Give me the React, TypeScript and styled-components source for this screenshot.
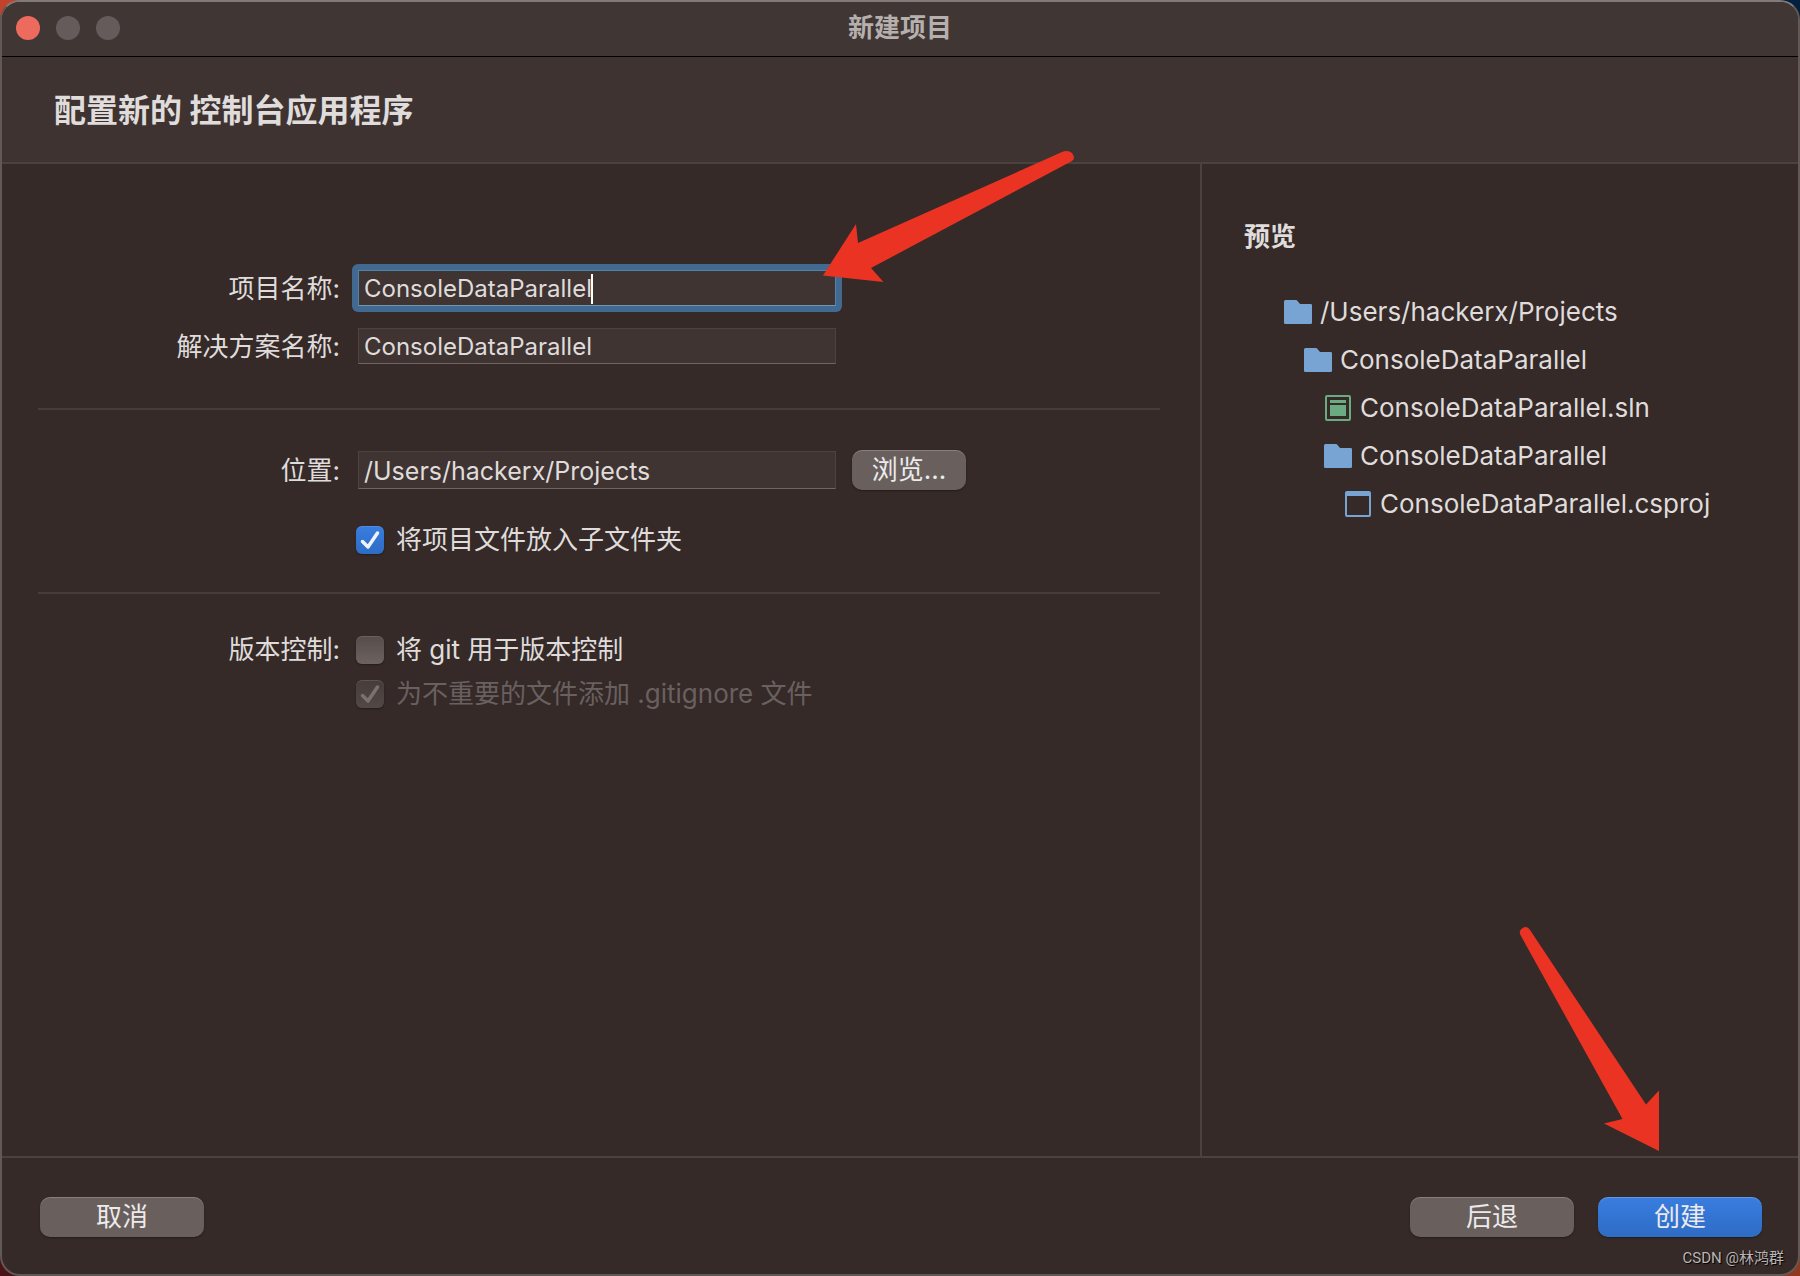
import React, { useLayoutEffect, useState } from "react";
import styled, { createGlobalStyle } from "styled-components";

const uiFont = 'Inter, "Noto Sans CJK SC", sans-serif';

const colors = {
  window: "#352a28",
  header: "#3e3331",
  titleBar: "#403634",
  line: "#4b413f",
  frame: "#625957",
  text: "#dfdcdb",
  dim: "#696060",
  field: "#3f3432",
  button: "#69605e",
  focus: "#42698f",
  folder: "#78a4d4",
  solution: "#6bab82",
  arrow: "#eb3323",
};

const GlobalStyle = createGlobalStyle`
  *, *::before, *::after { box-sizing: border-box; }
  body {
    margin: 0;
    color: ${colors.text};
    font: 400 26px/36px ${uiFont};
    background:
      linear-gradient(90deg, #c2432a 50%, #04203f 50%) top / 100% 50% no-repeat,
      linear-gradient(90deg, #4a1419 50%, #8f3a1e 50%) bottom / 100% 50% no-repeat;
  }
`;

const Window = styled.div`
  position: relative;
  display: flex;
  flex-direction: column;
  min-height: 100vh;
  overflow: hidden;
  border: 2px solid ${colors.frame};
  border-top-color: #827a78;
  border-radius: 20px;
  background: ${colors.window};
`;

const TitleBar = styled.div`
  display: grid;
  grid-template-columns: 1fr auto 1fr;
  align-items: center;
  height: 55px;
  padding: 0 14px 2px;
  border-bottom: 1px solid #000;
  background: ${colors.titleBar};
`;

const Lights = styled.div`
  display: flex;
  gap: 16px;
`;

const Light = styled.button<{ $color: string }>`
  width: 24px;
  height: 24px;
  padding: 0;
  border: 0;
  border-radius: 50%;
  background: ${(p) => p.$color};
`;

const WindowTitle = styled.div`
  color: #b5afae;
  font-weight: 700;
`;

const Header = styled.header`
  padding: 30px 52px 27px;
  border-bottom: 2px solid ${colors.line};
  background: ${colors.header};
`;

const Heading = styled.h1`
  margin: 0;
  font-size: 32px;
  font-weight: 700;
  line-height: 48px;
`;

const Body = styled.div`
  display: flex;
  flex: 1;
`;

const Form = styled.form`
  flex: 1;
  padding: 68px 40px 0 36px;
`;

const Section = styled.section<{ $bottom: number }>`
  padding-top: 36px;
  padding-bottom: ${(p) => p.$bottom}px;

  & + & {
    border-top: 2px solid #463c3a;
  }
`;

const Row = styled.div<{ $gap?: number }>`
  display: grid;
  grid-template-columns: 302px auto 1fr;
  align-items: center;
  min-height: 40px;
  margin-top: ${(p) => p.$gap ?? 0}px;
`;

const FieldLabel = styled.label`
  padding-top: 2px;
  text-align: right;
`;

const FieldCell = styled.div<{ $focused?: boolean }>`
  position: relative;
  margin: 0 16px 0 18px;

  &::before {
    content: "";
    display: ${(p) => (p.$focused ? "block" : "none")};
    position: absolute;
    inset: -6px;
    border-radius: 6px;
    background: ${colors.focus};
  }
`;

const TextField = styled.input<{ $focused?: boolean; $tall?: boolean }>`
  position: relative;
  display: block;
  width: 478px;
  height: ${(p) => (p.$tall ? 38 : 36)}px;
  padding: 2px 5px 0;
  border: 1px solid ${(p) => (p.$focused ? "#5482ab" : "#4c4240")};
  border-bottom-color: ${(p) => (p.$focused ? "#7094b5" : "#6f6664")};
  border-radius: 0;
  outline: none;
  background: ${colors.field};
  color: inherit;
  font: inherit;
  font-size: ${(p) => (p.$tall ? 25 : 24)}px;
  caret-color: transparent;
`;

const Caret = styled.span`
  position: absolute;
  top: 4px;
  width: 2px;
  height: 30px;
  background: #fff;
`;

const PushButton = styled.button<{ $primary?: boolean; $small?: boolean }>`
  width: ${(p) => (p.$small ? 114 : 164)}px;
  height: 40px;
  padding: 0;
  border: 0;
  border-radius: 10px;
  background: ${(p) => (p.$primary ? "linear-gradient(#387de0, #2e6cc5)" : colors.button)};
  box-shadow: inset 0 1px 0 rgba(255, 255, 255, 0.2), 0 1px 2px rgba(0, 0, 0, 0.35);
  color: #eceaea;
  font: inherit;
  line-height: 36px;
`;

const CheckLabel = styled.label<{ $dim?: boolean }>`
  display: flex;
  grid-column: 2 / -1;
  align-items: center;
  gap: 12px;
  margin-left: 16px;
  color: ${(p) => (p.$dim ? colors.dim : "inherit")};
`;

const CheckBox = styled.span`
  position: relative;
  display: block;
  width: 28px;
  height: 28px;
`;

const CheckInput = styled.input`
  display: block;
  width: 28px;
  height: 28px;
  margin: 0;
  appearance: none;
  border-radius: 6px;
  background: linear-gradient(#564c4a, #6c6260);
  box-shadow: inset 0 1px 0 rgba(255, 255, 255, 0.12), 0 1px 2px rgba(0, 0, 0, 0.35);

  &:checked {
    background: linear-gradient(#387de0, #2e6cc5);
  }

  &:checked:disabled {
    background: linear-gradient(#463c3a, #524846);
  }
`;

const CheckMark = styled.svg`
  position: absolute;
  inset: 0;
  pointer-events: none;
`;

const CheckRowLabel = styled.span`
  text-align: right;
`;

const Preview = styled.aside`
  width: 598px;
  padding: 55px 38px 0 42px;
  border-left: 2px solid ${colors.line};
`;

const PreviewTitle = styled.h2`
  margin: 0 0 33px;
  font-size: 26px;
  font-weight: 700;
  line-height: 36px;
`;

const Tree = styled.ul`
  margin: 0;
  padding: 0 0 0 40px;
  list-style: none;
`;

const TreeItem = styled.li<{ $level: number }>`
  display: flex;
  align-items: center;
  gap: 8px;
  height: 48px;
  padding-left: ${(p) => p.$level * 20}px;
`;

const Footer = styled.footer`
  display: flex;
  gap: 24px;
  padding: 39px 36px 37px 38px;
  border-top: 2px solid ${colors.line};
`;

const Spacer = styled.div`
  flex: 1;
`;

const NameArrow = styled.svg`
  position: absolute;
  z-index: 1;
  top: -120px;
  left: 464px;
  pointer-events: none;
`;

const CreateSlot = styled.div`
  position: relative;
`;

const CreateArrow = styled.svg`
  position: absolute;
  right: 102px;
  bottom: 85px;
  pointer-events: none;
`;

const Watermark = styled.div`
  position: absolute;
  right: 14px;
  bottom: 6px;
  color: #b9b5b4;
  font: 15px/20px Roboto, "Noto Sans CJK SC", sans-serif;
  text-shadow: 1px 1px 1px #000;
`;

function FolderIcon() {
  return (
    <svg width="28" height="26" viewBox="0 0 28 26" aria-hidden="true">
      <path
        d="M1.500 1H12Q12.800 1 13.300 1.700L16 5H26.800Q28 5 28 6.200V23.800Q28 25 26.800 25H1.200Q0 25 0 23.800V2.500Q0 1 1.500 1Z"
        fill={colors.folder}
      />
    </svg>
  );
}

function SolutionIcon() {
  return (
    <svg width="28" height="26" viewBox="0 0 28 26" aria-hidden="true">
      <rect x="2" y="1" width="24" height="24" rx="1" fill="none" stroke={colors.solution} strokeWidth="2" />
      <path d="M6 5H22V8H6ZM6 10H22V21H6Z" fill={colors.solution} />
    </svg>
  );
}

function ProjectIcon() {
  return (
    <svg width="28" height="26" viewBox="0 0 28 26" aria-hidden="true">
      <rect x="2" y="1" width="24" height="24" rx="1" fill="none" stroke={colors.folder} strokeWidth="2" />
      <path d="M2 1H26V5H2Z" fill={colors.folder} />
    </svg>
  );
}

type CheckProps = {
  label: string;
  checked: boolean;
  disabled?: boolean;
  onChange?: (value: boolean) => void;
};

function Check({ label, checked, disabled, onChange }: CheckProps) {
  return (
    <CheckLabel $dim={disabled}>
      <CheckBox>
        <CheckInput
          type="checkbox"
          checked={checked}
          disabled={disabled}
          onChange={(e) => onChange?.(e.target.checked)}
        />
        {checked && (
          <CheckMark width="28" height="28" viewBox="0 0 28 28" aria-hidden="true">
            <path
              d="M6.500 15.500L12 21L21.500 7"
              fill="none"
              stroke={disabled ? "#7b7270" : "#eef3fb"}
              strokeWidth="3.500"
              strokeLinecap="round"
              strokeLinejoin="round"
            />
          </CheckMark>
        )}
      </CheckBox>
      {label}
    </CheckLabel>
  );
}

function textWidth(text: string) {
  const context = document.createElement("canvas").getContext("2d");
  if (!context) return 0;
  context.font = `24px ${uiFont}`;
  return Math.round(context.measureText(text).width);
}

export default function App() {
  const [projectName, setProjectName] = useState("ConsoleDataParallel");
  const [solutionName, setSolutionName] = useState("ConsoleDataParallel");
  const [location, setLocation] = useState("/Users/hackerx/Projects");
  const [subfolder, setSubfolder] = useState(true);
  const [git, setGit] = useState(false);
  const [caretX, setCaretX] = useState(0);

  useLayoutEffect(() => setCaretX(5 + textWidth(projectName)), [projectName]);

  const tree = [
    { level: 0, icon: <FolderIcon />, name: location },
    { level: 1, icon: <FolderIcon />, name: solutionName },
    { level: 2, icon: <SolutionIcon />, name: `${solutionName}.sln` },
    { level: 2, icon: <FolderIcon />, name: projectName },
    { level: 3, icon: <ProjectIcon />, name: `${projectName}.csproj` },
  ];

  return (
    <>
      <GlobalStyle />
      <Window>
        <TitleBar>
          <Lights>
            <Light type="button" $color="#ed6a5e" />
            <Light type="button" $color="#645b5a" />
            <Light type="button" $color="#645b5a" />
          </Lights>
          <WindowTitle>新建项目</WindowTitle>
        </TitleBar>
        <Header>
          <Heading>配置新的 控制台应用程序</Heading>
        </Header>
        <Body>
          <Form id="project" onSubmit={(e) => e.preventDefault()}>
            <Section $bottom={42}>
              <Row>
                <FieldLabel htmlFor="project-name">项目名称:</FieldLabel>
                <FieldCell $focused>
                  <TextField
                    id="project-name"
                    $focused
                    value={projectName}
                    onChange={(e) => setProjectName(e.target.value)}
                  />
                  <Caret style={{ left: caretX }} />
                  <NameArrow width="254" height="136" viewBox="822 150 254 136" aria-hidden="true">
                    <path
                      d="M823 275.500L856 224L858 243L1062 152Q1068 149.500 1072 153Q1076 158 1072 161L871 268L883.500 282Z"
                      fill={colors.arrow}
                    />
                  </NameArrow>
                </FieldCell>
              </Row>
              <Row $gap={18}>
                <FieldLabel htmlFor="solution-name">解决方案名称:</FieldLabel>
                <FieldCell>
                  <TextField
                    id="solution-name"
                    value={solutionName}
                    onChange={(e) => setSolutionName(e.target.value)}
                  />
                </FieldCell>
              </Row>
            </Section>
            <Section $bottom={32}>
              <Row $gap={4}>
                <FieldLabel htmlFor="location">位置:</FieldLabel>
                <FieldCell>
                  <TextField id="location" $tall value={location} onChange={(e) => setLocation(e.target.value)} />
                </FieldCell>
                <PushButton type="button" $small>
                  浏览...
                </PushButton>
              </Row>
              <Row $gap={30}>
                <Check label="将项目文件放入子文件夹" checked={subfolder} onChange={setSubfolder} />
              </Row>
            </Section>
            <Section $bottom={32}>
              <Row>
                <CheckRowLabel>版本控制:</CheckRowLabel>
                <Check label="将 git 用于版本控制" checked={git} onChange={setGit} />
              </Row>
              <Row $gap={4}>
                <Check label="为不重要的文件添加 .gitignore 文件" checked disabled />
              </Row>
            </Section>
          </Form>
          <Preview>
            <PreviewTitle>预览</PreviewTitle>
            <Tree>
              {tree.map((item, index) => (
                <TreeItem key={index} $level={item.level}>
                  {item.icon}
                  {item.name}
                </TreeItem>
              ))}
            </Tree>
          </Preview>
        </Body>
        <Footer>
          <PushButton type="button">取消</PushButton>
          <Spacer />
          <PushButton type="button">后退</PushButton>
          <CreateSlot>
            <PushButton type="submit" form="project" $primary>
              创建
            </PushButton>
            <CreateArrow width="142" height="226" viewBox="1518 926 142 226" aria-hidden="true">
              <path
                d="M1521 936Q1518 931 1522 928.500Q1527 925 1530 930L1646 1104.500L1659 1090.500V1151L1604 1123.500L1622.500 1119Z"
                fill={colors.arrow}
              />
            </CreateArrow>
          </CreateSlot>
        </Footer>
        <Watermark>CSDN @林鸿群</Watermark>
      </Window>
    </>
  );
}
